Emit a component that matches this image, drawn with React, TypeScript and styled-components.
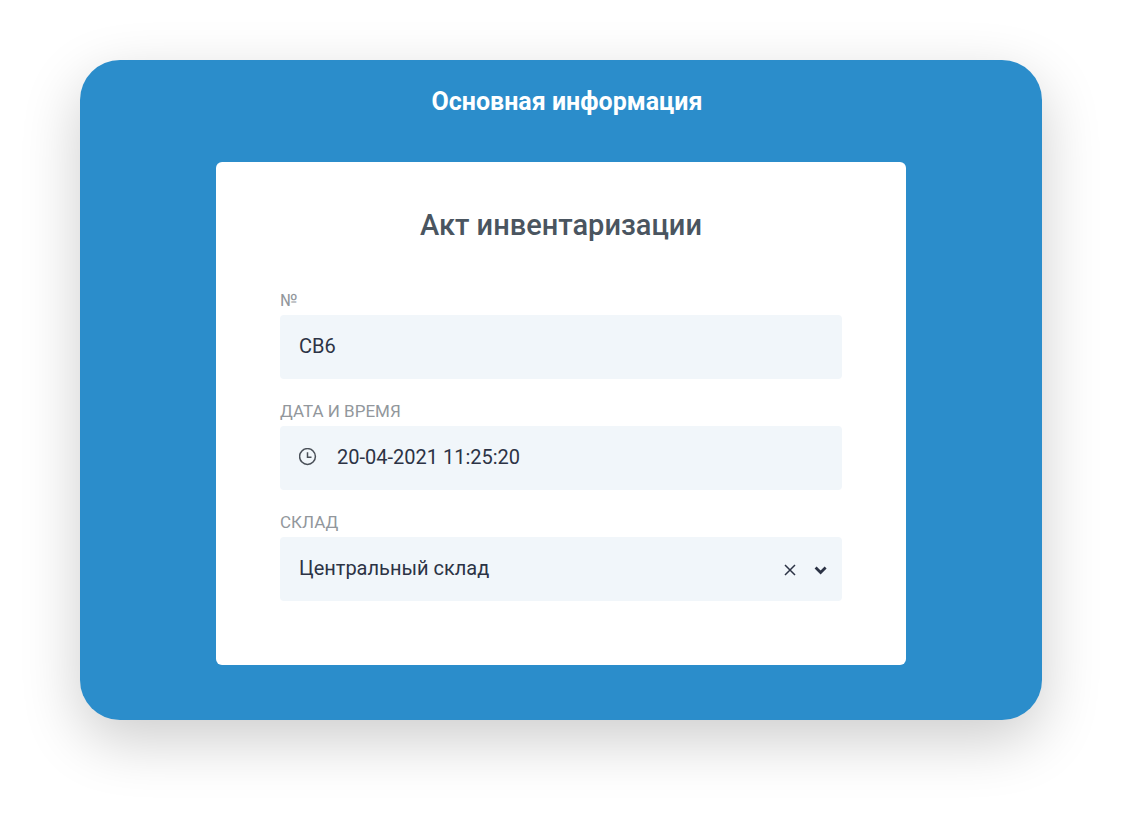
import React from "react";
import styled, { createGlobalStyle } from "styled-components";

const GlobalStyle = createGlobalStyle`
  * { box-sizing: border-box; }
  body {
    margin: 0;
    background: #ffffff;
    font-family: Roboto, "Liberation Sans", sans-serif;
  }
`;

const Page = styled.div`
  padding: 60px 80px 100px;
`;

const Panel = styled.main`
  display: flex;
  flex-direction: column;
  align-items: center;
  padding: 26px 40px 55px;
  border-radius: 40px;
  background: #2b8dcb;
  box-shadow: 0 20px 60px rgba(0, 0, 0, 0.2);
`;

const PanelTitle = styled.h1`
  margin: 0 0 44px;
  padding-left: 12px;
  font-size: 25px;
  line-height: 32px;
  font-weight: 700;
  color: #ffffff;
`;

const Card = styled.form`
  width: 100%;
  max-width: 690px;
  padding: 43px 64px 64px;
  border-radius: 6px;
  background: #ffffff;
`;

const CardTitle = styled.h2`
  margin: 0 0 43px;
  font-size: 29px;
  line-height: 40px;
  font-weight: 500;
  text-align: center;
  color: #4a5560;
`;

const Field = styled.div`
  display: flex;
  flex-direction: column;
  & + & { margin-top: 20px; }
`;

const Label = styled.label`
  padding-bottom: 3px;
  font-size: 17px;
  line-height: 24px;
  color: #92979c;
`;

const Control = styled.div`
  display: flex;
  align-items: center;
  height: 64px;
  padding: 0 12px 2px 19px;
  border-radius: 4px;
  background: #f1f6fa;
  color: #2c3345;
`;

const Input = styled.input`
  flex: 1;
  min-width: 0;
  padding: 0;
  border: 0;
  outline: 0;
  background: transparent;
  font: 400 20px/28px Roboto, "Liberation Sans", sans-serif;
  color: inherit;
`;

const Select = styled.select`
  flex: 1;
  min-width: 0;
  padding: 0;
  border: 0;
  outline: 0;
  appearance: none;
  background: transparent;
  font: 400 20px/28px Roboto, "Liberation Sans", sans-serif;
  color: inherit;
`;

const ClockIcon = styled.svg`
  flex: none;
  margin-right: 20px;
  color: #4a5058;
`;

const IconButton = styled.button`
  display: flex;
  flex: none;
  margin-left: 12px;
  padding: 4px 0 0;
  border: 0;
  background: transparent;
  color: inherit;
`;

export default function App() {
  return (
    <>
      <GlobalStyle />
      <Page>
        <Panel>
          <PanelTitle>Основная информация</PanelTitle>
          <Card>
            <CardTitle>Акт инвентаризации</CardTitle>
            <Field>
              <Label htmlFor="number">№</Label>
              <Control>
                <Input id="number" defaultValue="СВ6" />
              </Control>
            </Field>
            <Field>
              <Label htmlFor="date">ДАТА И ВРЕМЯ</Label>
              <Control>
                <ClockIcon width="18" height="18" viewBox="0 0 18 18" fill="none" stroke="currentColor" strokeWidth="1.5" aria-hidden="true">
                  <circle cx="8.5" cy="8.5" r="7.9" />
                  <path d="M8.5 4.2v5h4" />
                </ClockIcon>
                <Input id="date" defaultValue="20-04-2021 11:25:20" />
              </Control>
            </Field>
            <Field>
              <Label htmlFor="warehouse">СКЛАД</Label>
              <Control>
                <Select id="warehouse" defaultValue="central">
                  <option value="central">Центральный склад</option>
                </Select>
                <IconButton type="button" aria-label="Очистить">
                  <svg width="18" height="18" viewBox="0 0 18 18" fill="none" stroke="currentColor" strokeWidth="1.5">
                    <path d="M3 4l10 10M13 4L3 14" />
                  </svg>
                </IconButton>
                <IconButton type="button" aria-label="Открыть список">
                  <svg width="18" height="18" viewBox="0 0 18 18" fill="none" stroke="currentColor" strokeWidth="2.8">
                    <path d="M3.6 6.4l5 5 5-5" />
                  </svg>
                </IconButton>
              </Control>
            </Field>
          </Card>
        </Panel>
      </Page>
    </>
  );
}
